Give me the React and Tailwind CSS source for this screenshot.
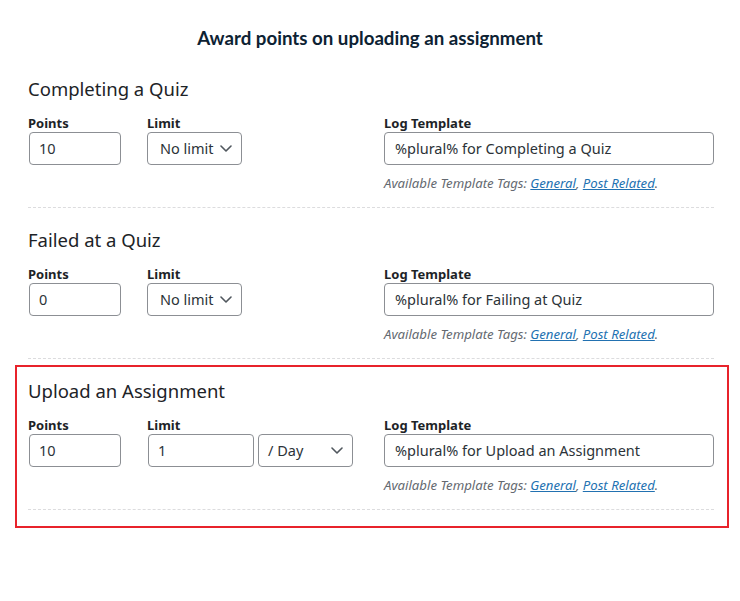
import React from "react";

function Chevron() {
  return (
    <svg width="12" height="7" viewBox="0 0 12 7" fill="none" className="shrink-0">
      <path d="M1 1l5 5 5-5" stroke="#50575e" strokeWidth="1.6" strokeLinecap="round" strokeLinejoin="round" />
    </svg>
  );
}

function Section({ title, points, limit, template, highlight }) {
  return (
    <div
      className={
        "border-2 pl-[11px] pr-[13px] pt-[11px] " +
        (highlight ? "border-[#e8232b] pb-[16px]" : "border-transparent pb-[4px]")
      }
    >
      <div className="text-[18.5px] leading-[26px] text-[#1d2327]">{title}</div>
      <div className="flex mt-[12px]">
        <div className="w-[119px] shrink-0">
          <div className="text-[13px] leading-[18px] font-bold text-[#1d2327]">Points</div>
          <div className="ml-[1px] w-[92px] h-[33px] border border-[#8c8f94] rounded-[4px] flex items-center pl-[9px] text-[14.5px] text-[#2c3338]">
            {points}
          </div>
        </div>
        <div className="w-[237px] shrink-0">
          <div className="text-[13px] leading-[18px] font-bold text-[#1d2327]">Limit</div>
          {limit === null ? (
            <div className="w-[95px] h-[33px] border border-[#8c8f94] rounded-[4px] flex items-center justify-between pl-[12px] pr-[9px] text-[14.5px] text-[#2c3338]">
              <span>No limit</span>
              <Chevron />
            </div>
          ) : (
            <div className="flex gap-[4px]">
              <div className="ml-[1px] w-[106px] h-[33px] border border-[#8c8f94] rounded-[4px] flex items-center pl-[9px] text-[14.5px] text-[#2c3338]">
                {limit}
              </div>
              <div className="w-[95px] h-[33px] border border-[#8c8f94] rounded-[4px] flex items-center justify-between pl-[9px] pr-[9px] text-[14.5px] text-[#2c3338]">
                <span>/ Day</span>
                <Chevron />
              </div>
            </div>
          )}
        </div>
        <div className="flex-1">
          <div className="text-[13px] leading-[18px] font-bold text-[#1d2327]">Log Template</div>
          <div className="h-[33px] border border-[#8c8f94] rounded-[4px] flex items-center pl-[10px] text-[14.5px] text-[#2c3338]">
            {template}
          </div>
          <div className="mt-[9px] text-[13.2px] leading-[18px] italic text-[#646970]">
            Available Template Tags: <span className="text-[#2271b1] underline">General</span>,{" "}
            <span className="text-[#2271b1] underline">Post Related</span>.
          </div>
        </div>
      </div>
      <div className="mt-[15px] border-t border-dashed border-[#dcdcde]" />
    </div>
  );
}

export default function App() {
  return (
    <div className="w-[740px] h-[601px] bg-white" style={{ fontFamily: '"Noto Sans", "Open Sans", sans-serif' }}>
      <div className="pt-[27px] text-center">
        <div className="text-[18.7px] leading-[22px] font-bold text-[#0d2233]" style={{ fontFamily: 'Lato, sans-serif' }}>
          Award points on uploading an assignment
        </div>
      </div>
      <div className="ml-[15px] w-[714px] mt-[14px]">
        <Section title="Completing a Quiz" points="10" limit={null} template="%plural% for Completing a Quiz" />
        <Section title="Failed at a Quiz" points="0" limit={null} template="%plural% for Failing at Quiz" />
        <Section title="Upload an Assignment" points="10" limit="1" template="%plural% for Upload an Assignment" highlight />
      </div>
    </div>
  );
}
